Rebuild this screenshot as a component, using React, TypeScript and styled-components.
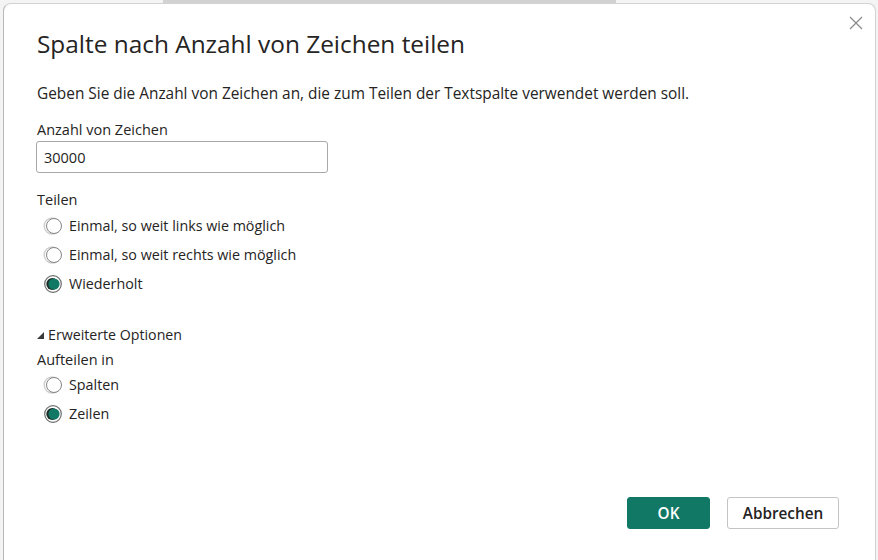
import React from "react";
import styled, { createGlobalStyle } from "styled-components";

const Global = createGlobalStyle`
  html, body { margin: 0; padding: 0; }
  body {
    font-family: "Open Sans", "Noto Sans", sans-serif;
    color: #252423;
    background: #f4f4f4;
  }
`;

const Page = styled.div`
  position: relative;
  width: 878px;
  height: 560px;
  overflow: hidden;
  background: #f4f4f4;
  display: flex;
  padding: 3px 2px 0 3px;
  box-sizing: border-box;
`;

const BackdropBand = styled.div`
  position: absolute;
  top: 0;
  left: 163px;
  width: 453px;
  height: 4px;
  background: #d2d2d2;
`;

const Dialog = styled.div`
  position: relative;
  flex: 1;
  background: #ffffff;
  border-left: 1px solid #b8b8b8;
  border-top: 1px solid #d2d2d2;
  border-right: 1px solid #d2d2d2;
  border-radius: 8px 8px 0 0;
  display: flex;
  flex-direction: column;
  padding: 24px 36px 31px 33px;
  box-sizing: border-box;
`;

const CloseButton = styled.button`
  position: absolute;
  top: 8px;
  right: 8px;
  width: 22px;
  height: 22px;
  border: none;
  background: transparent;
  padding: 0;
  display: flex;
  align-items: center;
  justify-content: center;
`;

const Title = styled.h1`
  margin: 0;
  font-size: 24.4px;
  line-height: 32px;
  font-weight: 400;
  color: #252423;
`;

const Description = styled.p`
  margin: 24px 0 0;
  font-size: 15.4px;
  line-height: 20px;
`;

const Label = styled.div<{ $gap: number }>`
  margin-top: ${(p) => p.$gap}px;
  font-size: 14.5px;
  line-height: 20px;
`;

const Input = styled.input`
  margin: 1px 0 0 -1px;
  width: 292px;
  height: 32px;
  box-sizing: border-box;
  border: 1px solid #a8a8a8;
  border-radius: 3px;
  padding: 0 7px;
  font-family: inherit;
  font-size: 14.5px;
  color: #252423;
  outline: none;
`;

const RadioGroup = styled.div<{ $gap: number }>`
  margin-top: ${(p) => p.$gap}px;
  display: flex;
  flex-direction: column;
`;

const RadioRow = styled.label`
  height: 29px;
  display: flex;
  align-items: center;
  gap: 6px;
  padding-left: 6px;
  font-size: 14.3px;
`;

const Toggle = styled.div`
  margin-top: 27px;
  display: flex;
  align-items: center;
  gap: 4px;
  font-size: 14.2px;
  line-height: 20px;
`;

const Footer = styled.div`
  margin-top: auto;
  display: flex;
  justify-content: flex-end;
  gap: 17px;
`;

const Button = styled.button<{ $primary?: boolean }>`
  height: 32px;
  box-sizing: border-box;
  border-radius: 3px;
  font-family: inherit;
  font-size: 15.3px;
  font-weight: 600;
  padding: 0;
  width: ${(p) => (p.$primary ? "83px" : "112px")};
  background: ${(p) => (p.$primary ? "#117865" : "#ffffff")};
  color: ${(p) => (p.$primary ? "#ffffff" : "#252423")};
  border: 1px solid ${(p) => (p.$primary ? "#117865" : "#c4c4c4")};
`;

const RadioIcon = ({ checked }: { checked?: boolean }) =>
  checked ? (
    <svg width="20" height="20" viewBox="0 0 20 20">
      <circle cx="10" cy="10" r="8.3" fill="#fff" stroke="#6a6e6c" strokeWidth="1.2" />
      <circle cx="9.3" cy="10" r="6" fill="#1d2b28" />
      <circle cx="11" cy="10" r="5.6" fill="#117865" />
    </svg>
  ) : (
    <svg width="20" height="20" viewBox="0 0 20 20">
      <circle cx="9.2" cy="10" r="8" fill="none" stroke="#cfcfcf" strokeWidth="1.4" />
      <circle cx="11" cy="10" r="7.2" fill="#fff" />
      <circle cx="11" cy="10" r="7.5" fill="none" stroke="#858585" strokeWidth="1" />
    </svg>
  );

const Radio = ({ label, checked }: { label: string; checked?: boolean }) => (
  <RadioRow>
    <RadioIcon checked={checked} />
    <span>{label}</span>
  </RadioRow>
);

export default function App() {
  return (
    <>
      <Global />
      <Page>
        <BackdropBand />
        <Dialog>
          <CloseButton aria-label="Schließen">
            <svg width="14" height="14" viewBox="0 0 14 14">
              <path d="M1 1 L13 13 M13 1 L1 13" stroke="#8a8a8a" strokeWidth="1.3" fill="none" />
            </svg>
          </CloseButton>
          <Title>Spalte nach Anzahl von Zeichen teilen</Title>
          <Description>
            Geben Sie die Anzahl von Zeichen an, die zum Teilen der Textspalte verwendet werden soll.
          </Description>
          <Label $gap={16}>Anzahl von Zeichen</Label>
          <Input defaultValue="30000" />
          <Label $gap={17}>Teilen</Label>
          <RadioGroup $gap={1}>
            <Radio label="Einmal, so weit links wie möglich" />
            <Radio label="Einmal, so weit rechts wie möglich" />
            <Radio label="Wiederholt" checked />
          </RadioGroup>
          <Toggle>
            <svg width="7" height="7" viewBox="0 0 7 7">
              <polygon points="7,0 7,7 0,7" fill="#3a3a3a" />
            </svg>
            <span>Erweiterte Optionen</span>
          </Toggle>
          <Label $gap={5}>Aufteilen in</Label>
          <RadioGroup $gap={0}>
            <Radio label="Spalten" />
            <Radio label="Zeilen" checked />
          </RadioGroup>
          <Footer>
            <Button $primary>OK</Button>
            <Button>Abbrechen</Button>
          </Footer>
        </Dialog>
      </Page>
    </>
  );
}
